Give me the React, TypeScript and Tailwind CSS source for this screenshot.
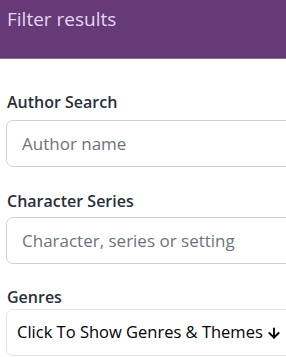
import React from 'react';
import { ArrowDown } from 'lucide-react';

const App: React.FC = () => {
  return (
    <div className="w-[286px] h-[357px] overflow-hidden bg-white font-['Open_Sans',sans-serif]">
      <div className="h-[59px] bg-[#663977] border-b border-[#8a6a98] px-[7px] pt-[6px]">
        <h2 className="text-[19px] leading-[26px] text-[#e3d6f2]">Filter results</h2>
      </div>

      <div className="pl-[6px] w-[300px]">
        <div className="mt-[33px]">
          <label className="block text-[16px] leading-[20px] font-semibold text-[#2b2f3a] pl-px">Author Search</label>
          <input
            type="text"
            placeholder="Author name"
            className="mt-[8px] w-full h-[47px] px-[15px] rounded-[7px] border border-[#cdd0d6] text-[17px] outline-none placeholder:text-[#6c737d]"
          />
        </div>

        <div className="mt-[24px]">
          <label className="block text-[16px] leading-[20px] font-semibold text-[#2b2f3a] pl-px">Character Series</label>
          <input
            type="text"
            placeholder="Character, series or setting"
            className="mt-[6px] w-full h-[47px] px-[15px] rounded-[7px] border border-[#cdd0d6] text-[17px] outline-none placeholder:text-[#6c737d]"
          />
        </div>

        <div className="mt-[23px]">
          <label className="block text-[16px] leading-[20px] font-semibold text-[#2b2f3a] pl-px">Genres</label>
          <button className="mt-[2px] w-full h-[47px] px-[10px] rounded-[7px] border border-[#e2e4e8] text-left text-[16.5px] text-black flex items-center gap-[3px] whitespace-nowrap">
            Click To Show Genres &amp; Themes
            <ArrowDown size={16} strokeWidth={2.75} className="shrink-0" />
          </button>
        </div>
      </div>
    </div>
  );
};

export default App;
